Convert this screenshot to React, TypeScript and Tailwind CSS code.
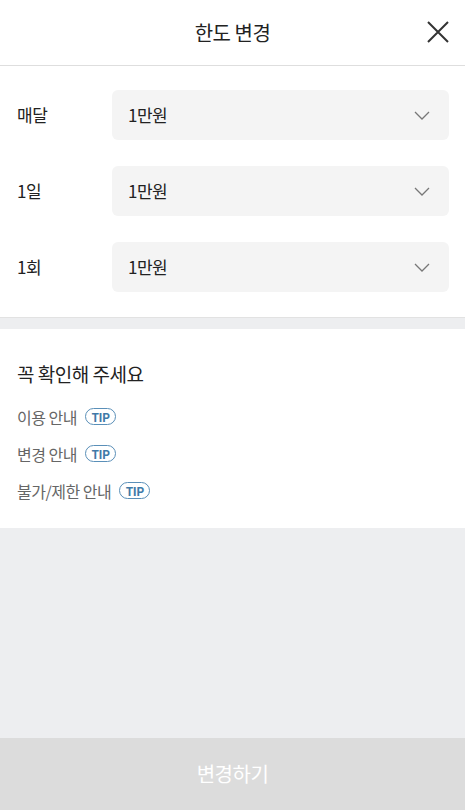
import { useState } from 'react'

// ---------------------------------------------------------------------------
// Limit change sheet
// ---------------------------------------------------------------------------

const FONT = { fontFamily: '"Noto Sans CJK KR", "Noto Sans", sans-serif' }

const LIMITS = [
  { key: 'month', label: '매달' },
  { key: 'day', label: '1일' },
  { key: 'once', label: '1회' },
]

const NOTICES = ['이용 안내', '변경 안내', '불가/제한 안내']

function Chevron() {
  return (
    <svg width="16" height="9" viewBox="0 0 16 9" fill="none">
      <path d="M1 1l7 7 7-7" stroke="#777" strokeWidth="1.3" />
    </svg>
  )
}

function SelectRow({ label, value }: { label: string; value: string }) {
  return (
    <div className="flex items-center">
      <span className="w-[95px] shrink-0 text-[17px] text-[#222] tracking-[-0.5px]">{label}</span>
      <button
        type="button"
        className="flex h-[50px] flex-1 items-center justify-between rounded-[6px] bg-[#f4f4f4] pl-[16px] pr-[19px]"
      >
        <span className="text-[17px] text-[#222] tracking-[-0.5px]">{value}</span>
        <Chevron />
      </button>
    </div>
  )
}

function TipBadge() {
  return (
    <span className="ml-[8px] inline-flex h-[17px] w-[31px] items-center justify-center rounded-full border-[1.5px] border-[#5a8fb8] text-[12px] font-bold leading-none text-[#3f7aa8]">
      TIP
    </span>
  )
}

export default function App() {
  const [values] = useState<Record<string, string>>({
    month: '1만원',
    day: '1만원',
    once: '1만원',
  })

  return (
    <div className="flex h-[810px] w-[465px] flex-col bg-[#edeef0]" style={FONT}>
      {/* Header */}
      <header className="relative flex h-[66px] shrink-0 items-center justify-center border-b border-[#dedede] bg-white">
        <h1 className="text-[20px] text-[#222] tracking-[-0.5px]">한도 변경</h1>
        <button type="button" className="absolute right-[15px] top-[20px]">
          <svg width="24" height="24" viewBox="0 0 24 24" fill="none">
            <path d="M2 2l20 20M22 2L2 22" stroke="#333" strokeWidth="2" />
          </svg>
        </button>
      </header>

      {/* Limit selects */}
      <section className="flex flex-col gap-[26px] border-b border-[#e2e2e2] bg-white pb-[25px] pl-[17px] pr-[16px] pt-[24px]">
        {LIMITS.map((l) => (
          <SelectRow key={l.key} label={l.label} value={values[l.key]} />
        ))}
      </section>

      {/* Notices */}
      <section className="mt-[11px] flex h-[199px] flex-col bg-white px-[17px] pt-[31px]">
        <h2 className="text-[19px] text-[#222] tracking-[-0.5px]">꼭 확인해 주세요</h2>
        <ul className="mt-[16px] flex flex-col gap-[13px]">
          {NOTICES.map((n) => (
            <li key={n} className="flex h-[24px] items-center text-[16px] text-[#666] tracking-[-0.5px]">
              {n}
              <TipBadge />
            </li>
          ))}
        </ul>
      </section>

      <div className="flex-1" />

      {/* Submit */}
      <button
        type="button"
        className="flex h-[72px] shrink-0 items-center justify-center bg-[#dcdcdc] text-[20px] text-white tracking-[-0.5px]"
      >
        변경하기
      </button>
    </div>
  )
}
